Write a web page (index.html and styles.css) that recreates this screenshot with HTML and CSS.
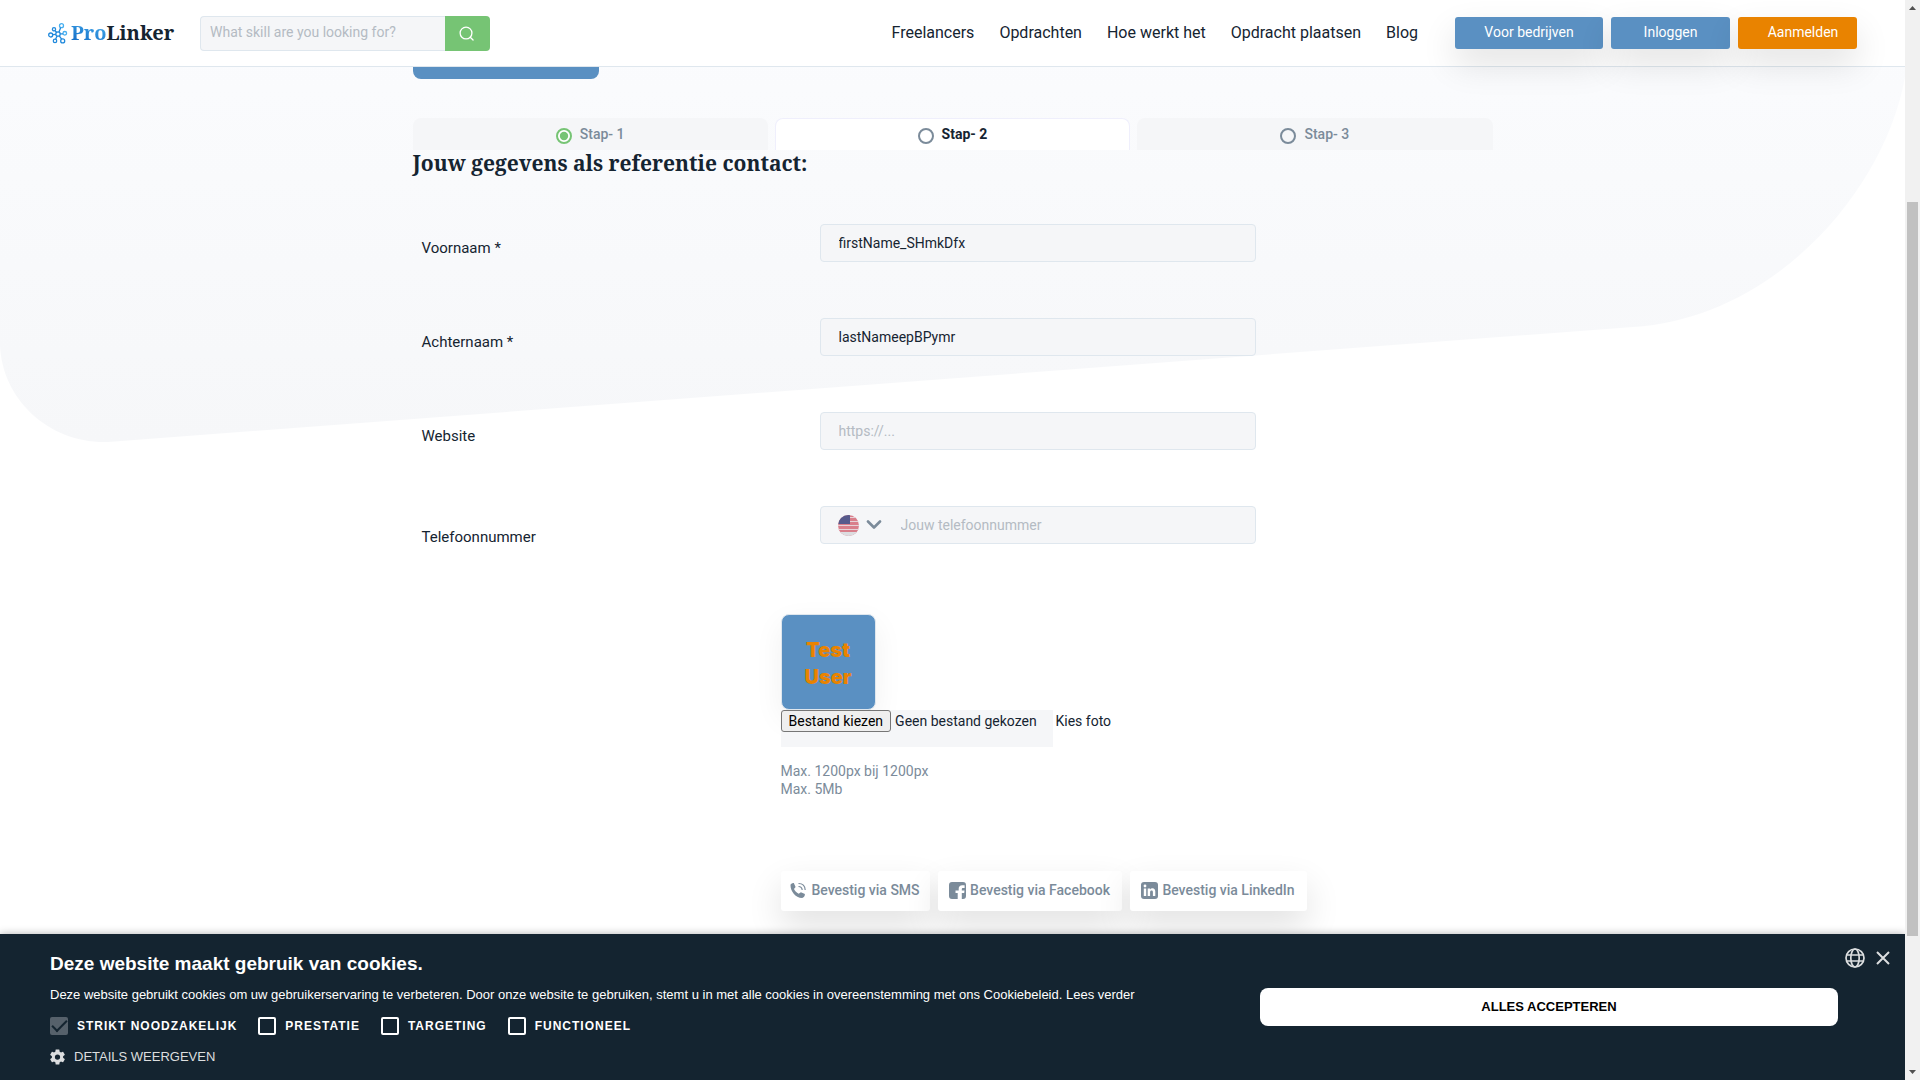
FILE: index.html
```html
<!DOCTYPE html>
<html lang="nl">
<head>
<meta charset="utf-8">
<title>ProLinker</title>
<link rel="stylesheet" href="styles.css">
</head>
<body>
<div class="page">
  <svg class="backdrop" viewBox="0 0 1905 460" preserveAspectRatio="none" aria-hidden="true">
    <defs><linearGradient id="wash" x1="0" y1="0" x2="0" y2="1"><stop offset="0" stop-color="#fbfcfe"/><stop offset="1" stop-color="#f6f7f9"/></linearGradient></defs>
    <path fill="url(#wash)" d="M0 0H1905V77C1885 190 1775 318 1633 327L108 442C50 444 2 400 0 345Z"/>
  </svg>

  <header class="topbar">
    <a class="logo" href="#" aria-label="ProLinker">
      <svg class="logo-mark" viewBox="0 0 20 21" fill="none" stroke="#2089dc" stroke-width="1.3">
        <circle cx="10" cy="11" r="2.200"/><circle cx="13.500" cy="2.700" r="2" stroke="#47aff0"/><circle cx="6" cy="6.300" r="1.600"/><circle cx="16.800" cy="10.300" r="1.800" stroke="#47aff0"/><circle cx="2.700" cy="12" r="2"/><circle cx="7" cy="17.900" r="1.700"/><circle cx="14.700" cy="17.900" r="2"/>
        <path d="M11 9l1.700-4.500M8.600 9.300L7 7.700M12.200 10.800h2.800M7.800 11.300l-3.100.400M9.100 13l-1.500 3.300M11.300 12.800l2.300 3.400"/>
      </svg>
      <span class="logo-text"><span class="logo-pro">Pro</span>Linker</span>
    </a>
    <form class="search">
      <input class="search-input" type="text" placeholder="What skill are you looking for?" aria-label="Zoeken">
      <button class="search-button" type="button" aria-label="Zoek">
        <svg width="15" height="15" viewBox="0 0 16 16" fill="none" stroke="#fff" stroke-width="1.4" stroke-linecap="round"><circle cx="7.500" cy="7.500" r="6.300"/><path d="M12 12l3 3"/></svg>
      </button>
    </form>
    <nav class="nav">
      <a href="#">Freelancers</a>
      <a href="#">Opdrachten</a>
      <a href="#">Hoe werkt het</a>
      <a href="#">Opdracht plaatsen</a>
      <a href="#">Blog</a>
    </nav>
    <div class="actions">
      <button class="action action-wide" type="button">Voor bedrijven</button>
      <button class="action" type="button">Inloggen</button>
      <button class="action action-signup" type="button">Aanmelden</button>
    </div>
  </header>

  <main class="content">
    <div class="previous-button"></div>
    <div class="steps">
      <div class="step">
        <svg class="step-icon" viewBox="0 0 16 16"><circle cx="8" cy="8" r="7" fill="#fff" stroke="#76c474" stroke-width="2"/><circle cx="8" cy="8" r="4.200" fill="#76c474"/></svg>
        <span>Stap- 1</span>
      </div>
      <div class="step step-active">
        <svg class="step-icon" viewBox="0 0 16 16"><circle cx="8" cy="8" r="7" fill="none" stroke="#7b8b9a" stroke-width="2"/></svg>
        <span>Stap- 2</span>
      </div>
      <div class="step">
        <svg class="step-icon" viewBox="0 0 16 16"><circle cx="8" cy="8" r="7" fill="none" stroke="#7b8b9a" stroke-width="2"/></svg>
        <span>Stap- 3</span>
      </div>
    </div>
    <h1 class="title">Jouw gegevens als referentie contact:</h1>

    <form class="form">
      <div class="row"><label for="first">Voornaam *</label><input class="field" id="first" type="text" value="firstName_SHmkDfx"></div>
      <div class="row"><label for="last">Achternaam *</label><input class="field" id="last" type="text" value="lastNameepBPymr"></div>
      <div class="row"><label for="site">Website</label><input class="field" id="site" type="text" placeholder="https://..."></div>
      <div class="row row-phone"><label for="phone">Telefoonnummer</label>
        <div class="field phone">
          <button class="country" type="button" aria-label="Land kiezen">
            <svg width="21" height="21" viewBox="0 0 21 21"><defs><clipPath id="disc"><circle cx="10.500" cy="10.500" r="10.500"/></clipPath></defs><g clip-path="url(#disc)"><path fill="#d97f8b" d="M0 0h21v21H0z"/><path stroke="#e6d3d8" d="M0 2.500h21M0 6.500h21M0 10.500h21M0 14.500h21"/><path fill="#dcdde0" d="M0 17h21v4H0z"/><path fill="#565a8c" d="M0 0h12v9H0z"/></g></svg>
            <svg width="16" height="10" viewBox="0 0 16 10" fill="none" stroke="#7b8b9a" stroke-width="2.600" stroke-linecap="round" stroke-linejoin="round"><path d="M2 1.500l6 6 6-6"/></svg>
          </button>
          <input class="phone-input" id="phone" type="text" placeholder="Jouw telefoonnummer">
        </div>
      </div>
    </form>

    <section class="photo">
      <div class="avatar">Test<br>User</div>
      <div class="upload">
        <label class="file"><input class="file-input" type="file"><span class="file-button">Bestand kiezen</span><span>Geen bestand gekozen</span></label>
        <span>Kies foto</span>
      </div>
      <p class="hint">Max. 1200px bij 1200px<br>Max. 5Mb</p>
      <div class="confirm">
        <button class="confirm-button" type="button">
          <svg class="confirm-icon" viewBox="0 0 17 17"><path fill="#7b8b9a" d="M.5 3.200C.5 2 2.300.8 3.800 1.100L5.600 5 4 7c1 2 2.500 3.700 4.700 4.700l2.200-1.500 4 1.900c.2 2.300-1.400 3.900-2.800 3.900C5.300 16 .5 9 .5 3.200z"/><path fill="none" stroke="#7b8b9a" stroke-width="1.200" d="M8.500 1.500c4 0 6.500 2.600 6.700 6.500M8.500 4.500c2.300 0 3.500 1.500 3.700 3.500"/></svg>
          Bevestig via SMS
        </button>
        <button class="confirm-button" type="button">
          <svg class="confirm-icon" viewBox="0 0 17 17"><path fill="#7b8b9a" fill-rule="evenodd" d="M3 0h11a3 3 0 0 1 3 3v11a3 3 0 0 1-3 3h-1.200v-6h2.400l.3-2.600h-2.700V7.200c0-.8.300-1.300 1.300-1.300h1.500V3.300h-2.400c-2.200 0-3.500 1.400-3.500 3.400v1.700H6.500V11h2.200v6H3a3 3 0 0 1-3-3V3a3 3 0 0 1 3-3z"/></svg>
          Bevestig via Facebook
        </button>
        <button class="confirm-button" type="button">
          <svg class="confirm-icon" viewBox="0 0 17 17"><rect width="17" height="17" rx="3" fill="#7b8b9a"/><circle cx="4" cy="4" r="1.400" fill="#fff"/><path fill="#fff" d="M2.800 6.500h2.400V14H2.800zM6.700 6.500H9v1c.5-.8 1.300-1.200 2.400-1.200 2 0 2.900 1.300 2.900 3.300V14h-2.400v-4c0-1-.4-1.600-1.300-1.600-1 0-1.500.7-1.500 1.700V14H6.700z"/></svg>
          Bevestig via LinkedIn
        </button>
      </div>
    </section>
  </main>

  <section class="cookies">
    <div class="cookies-text">
      <h2 class="cookies-title">Deze website maakt gebruik van cookies.</h2>
      <p class="cookies-copy">Deze website gebruikt cookies om uw gebruikerservaring te verbeteren. Door onze website te gebruiken, stemt u in met alle cookies in overeenstemming met ons Cookiebeleid. <a href="#">Lees verder</a></p>
      <div class="choices">
        <label class="choice"><input type="checkbox" checked disabled>STRIKT NOODZAKELIJK</label>
        <label class="choice"><input type="checkbox">PRESTATIE</label>
        <label class="choice"><input type="checkbox">TARGETING</label>
        <label class="choice"><input type="checkbox">FUNCTIONEEL</label>
      </div>
      <button class="details" type="button">
        <svg width="15" height="16" viewBox="2 2 20 20"><path fill="#dcdedf" d="M19.430 12.980c.04-.32.070-.64.070-.98s-.03-.66-.07-.98l2.110-1.650c.19-.15.240-.42.120-.64l-2-3.460c-.12-.22-.39-.3-.61-.22l-2.490 1c-.52-.4-1.080-.73-1.690-.98l-.38-2.650A.488.488 0 0 0 14 2h-4c-.25 0-.46.180-.49.420l-.38 2.650c-.61.250-1.170.590-1.690.980l-2.490-1c-.23-.09-.49 0-.61.220l-2 3.460c-.13.220-.07.490.12.640l2.110 1.650c-.04.320-.07.650-.07.980s.03.660.070.980l-2.110 1.650c-.19.150-.24.420-.12.640l2 3.460c.12.220.39.300.61.220l2.490-1c.52.400 1.080.730 1.690.980l.38 2.650c.03.240.24.420.49.420h4c.25 0 .46-.18.490-.42l.38-2.650c.61-.25 1.170-.59 1.690-.98l2.490 1c.23.090.49 0 .61-.22l2-3.460c.12-.22.070-.49-.12-.64l-2.110-1.650zM12 15.500a3.500 3.500 0 1 1 0-7 3.500 3.500 0 0 1 0 7z"/></svg>
        DETAILS WEERGEVEN
      </button>
    </div>
    <button class="accept" type="button">ALLES ACCEPTEREN</button>
    <div class="cookies-tools">
      <button type="button" aria-label="Taal"><svg width="20" height="20" viewBox="0 0 20 20" fill="none" stroke="#dcdedf" stroke-width="1.700"><circle cx="10" cy="10" r="9"/><ellipse cx="10" cy="10" rx="4.200" ry="9"/><path d="M1.700 7h16.600M1.700 13h16.600"/></svg></button>
      <button type="button" aria-label="Sluiten"><svg width="14" height="14" viewBox="0 0 14 14" stroke="#dcdedf" stroke-width="2"><path d="M1 1l12 12M13 1L1 13"/></svg></button>
    </div>
  </section>
</div>
<div class="scrollbar" aria-hidden="true">
  <svg width="15" height="15" viewBox="0 0 15 15"><path fill="#505050" d="M4 10h7L7.500 6z"/></svg>
  <div class="scroll-track"><div class="scroll-thumb"></div></div>
  <svg width="15" height="15" viewBox="0 0 15 15"><path fill="#505050" d="M4 5h7L7.500 9z"/></svg>
</div>
</body>
</html>
```
FILE: styles.css
```css
* { box-sizing: border-box; }
body {
  margin: 0;
  display: flex;
  height: 100vh;
  overflow: hidden;
  background: #fff;
  color: #152431;
  font: 14px/18px Roboto, sans-serif;
}
button, input { font: inherit; color: inherit; }
button { border: 0; padding: 0; background: none; cursor: pointer; }
a { color: inherit; text-decoration: none; }
svg { display: block; flex: none; }

.page {
  position: relative;
  flex: 1;
  min-width: 0;
  display: flex;
  flex-direction: column;
  overflow: hidden;
}
.backdrop { position: absolute; top: 0; left: 0; width: 100%; height: 460px; z-index: -1; }

.topbar {
  display: flex;
  align-items: center;
  flex: none;
  height: 67px;
  padding: 0 48px;
  background: #fff;
  border-bottom: 1px solid #dfe7ee;
}
.logo { display: flex; align-items: center; gap: 3px; width: 152px; }
.logo-mark { width: 20px; height: 21px; }
.logo-text { font: bold 20px/28px "Roboto Slab", "Noto Serif", "Liberation Serif", serif; }
.logo-pro {
  color: transparent;
  background: linear-gradient(20deg, #0a62c0, #4db5f2);
  background-clip: text;
}
.search { display: flex; width: 290px; height: 35px; }
.search-input {
  flex: 1;
  min-width: 0;
  padding: 0 9px 2px;
  background: #f5f6f8;
  border: 1px solid #dfe7ee;
  border-right: 0;
  border-radius: 4px 0 0 4px;
}
::placeholder { color: #b4bbc3; opacity: 1; }
.search-button {
  display: grid;
  place-items: center;
  width: 45px;
  padding-right: 2px;
  background: #76c474;
  border-radius: 0 4px 4px 0;
}
.nav { display: flex; gap: 25px; margin-left: auto; font-size: 16px; }
.actions { display: flex; gap: 8px; margin-left: 37px; }
.action {
  width: 119px;
  height: 32px;
  padding-bottom: 2px;
  color: #fff;
  background: #5a90c2;
  border-radius: 3px;
  box-shadow: 0 15px 35px rgba(0, 0, 0, .12);
}
.action-wide { width: 148px; }
.action-signup { padding-left: 11px; background: #e98300; }

.content { width: 1080px; max-width: 100%; margin: 0 auto; }
.previous-button { width: 186px; height: 12px; background: #5a90c2; border-radius: 0 0 8px 8px; }
.steps { display: grid; grid-template-columns: repeat(3, 1fr); gap: 7px; margin-top: 39px; }
.step {
  display: flex;
  align-items: center;
  justify-content: center;
  gap: 8px;
  height: 32px;
  background: #f5f6f8;
  border-radius: 8px 8px 0 0;
  color: #7b8b9a;
  font-weight: 500;
}
.step-icon { width: 16px; height: 16px; margin-top: 4px; }
.step-active {
  padding-bottom: 1px;
  background: #fff;
  border: 1px solid #efeffc;
  border-bottom: 0;
  color: #152431;
  font-weight: 700;
}
.title { margin: 0; font: bold 21px/26px "Roboto Slab", "Noto Serif", "Liberation Serif", serif; }

.form { margin-top: 48px; display: grid; gap: 56px; }
.row {
  display: grid;
  grid-template-columns: 398px 436px;
  padding-left: 9px;
  font-size: 15px;
}
.row label { padding-top: 15px; }
.row-phone label { padding-top: 22px; }
.field {
  width: 100%;
  height: 38px;
  padding: 0 18px;
  background: #f5f6f8;
  border: 1px solid #dfe7ee;
  border-radius: 4px;
  font-size: 14px;
}
.phone { display: flex; align-items: center; gap: 19px; padding-left: 17px; }
.country { display: flex; align-items: center; gap: 7px; }
.phone-input { flex: 1; min-width: 0; padding: 0; border: 0; background: none; }

.photo { margin: 68px 0 0 368px; }
.avatar {
  display: grid;
  place-items: center;
  width: 95px;
  height: 96px;
  padding-top: 4px;
  background: #5a90c2;
  border: 1px solid #dfe7ee;
  border-radius: 8px;
  box-shadow: 0 10px 30px rgba(0, 0, 0, .06);
  color: #e98300;
  font: 900 20px/27px Inter, sans-serif;
  text-align: center;
}
.upload { display: flex; gap: 3px; line-height: 22px; }
.file { position: relative; display: flex; align-items: flex-start; gap: 4px; width: 272px; height: 37px; background: #f5f6f8; }
.file-input { position: absolute; inset: 0; width: 100%; opacity: 0; }
.file-button {
  padding: 0 7px;
  line-height: 20px;
  color: #000;
  background: #efefef;
  border: 1px solid #767676;
  border-radius: 3px;
}
.hint { margin: 15px 0 0; color: #7b8b9a; }
.confirm { display: grid; grid-template-columns: 149px 184px 177px; gap: 8px; margin-top: 73px; }
.confirm-button {
  display: flex;
  align-items: center;
  justify-content: center;
  gap: 4px;
  height: 40px;
  padding-bottom: 2px;
  background: #fff;
  border-radius: 3px;
  box-shadow: 0 15px 35px rgba(0, 0, 0, .12);
  color: #7b8b9a;
  font-weight: 500;
}
.confirm-icon { width: 17px; height: 17px; }

.cookies {
  position: absolute;
  left: 0;
  right: 0;
  bottom: 0;
  display: flex;
  align-items: flex-start;
  height: 146px;
  padding: 18px 15px 0 50px;
  background: #142430;
  box-shadow: 0 0 8px rgba(0, 0, 0, .3);
  color: #fff;
  font: 13px/16px "Liberation Sans", Arial, sans-serif;
}
.cookies-text { flex: 1; }
.cookies-title { margin: 0; font-size: 19px; line-height: 24px; }
.cookies-copy { margin: 11px 0 14px; }
.choices { display: flex; gap: 21px; font-size: 12px; font-weight: bold; letter-spacing: 1px; }
.choice { display: flex; align-items: center; gap: 9px; line-height: 18px; }
.choice input {
  appearance: none;
  width: 18px;
  height: 18px;
  margin: 0;
  border: 2px solid #fff;
  border-radius: 2px;
}
.choice input:disabled {
  border: 0;
  background: #56616b;
}
.choice input:checked { display: grid; place-items: center; }
.choice input:checked::after {
  content: "";
  width: 13px;
  height: 6px;
  margin-bottom: 4px;
  border: solid #142430;
  border-width: 0 0 2px 2px;
  rotate: -45deg;
}
.details { display: flex; align-items: center; gap: 9px; margin-top: 14px; color: #dcdedf; }
.accept {
  width: 578px;
  height: 38px;
  margin-top: 36px;
  background: #fff;
  border-radius: 8px;
  color: #000;
  font-weight: bold;
}
.cookies-tools { display: flex; align-items: center; gap: 11px; margin-left: 7px; margin-top: -4px; }

.scrollbar { display: flex; flex-direction: column; flex: none; width: 15px; background: #f1f1f1; }
.scroll-track { flex: 1; padding: 17.3vh 2px 0; }
.scroll-thumb { height: 68vh; background: #c1c1c1; }
```
